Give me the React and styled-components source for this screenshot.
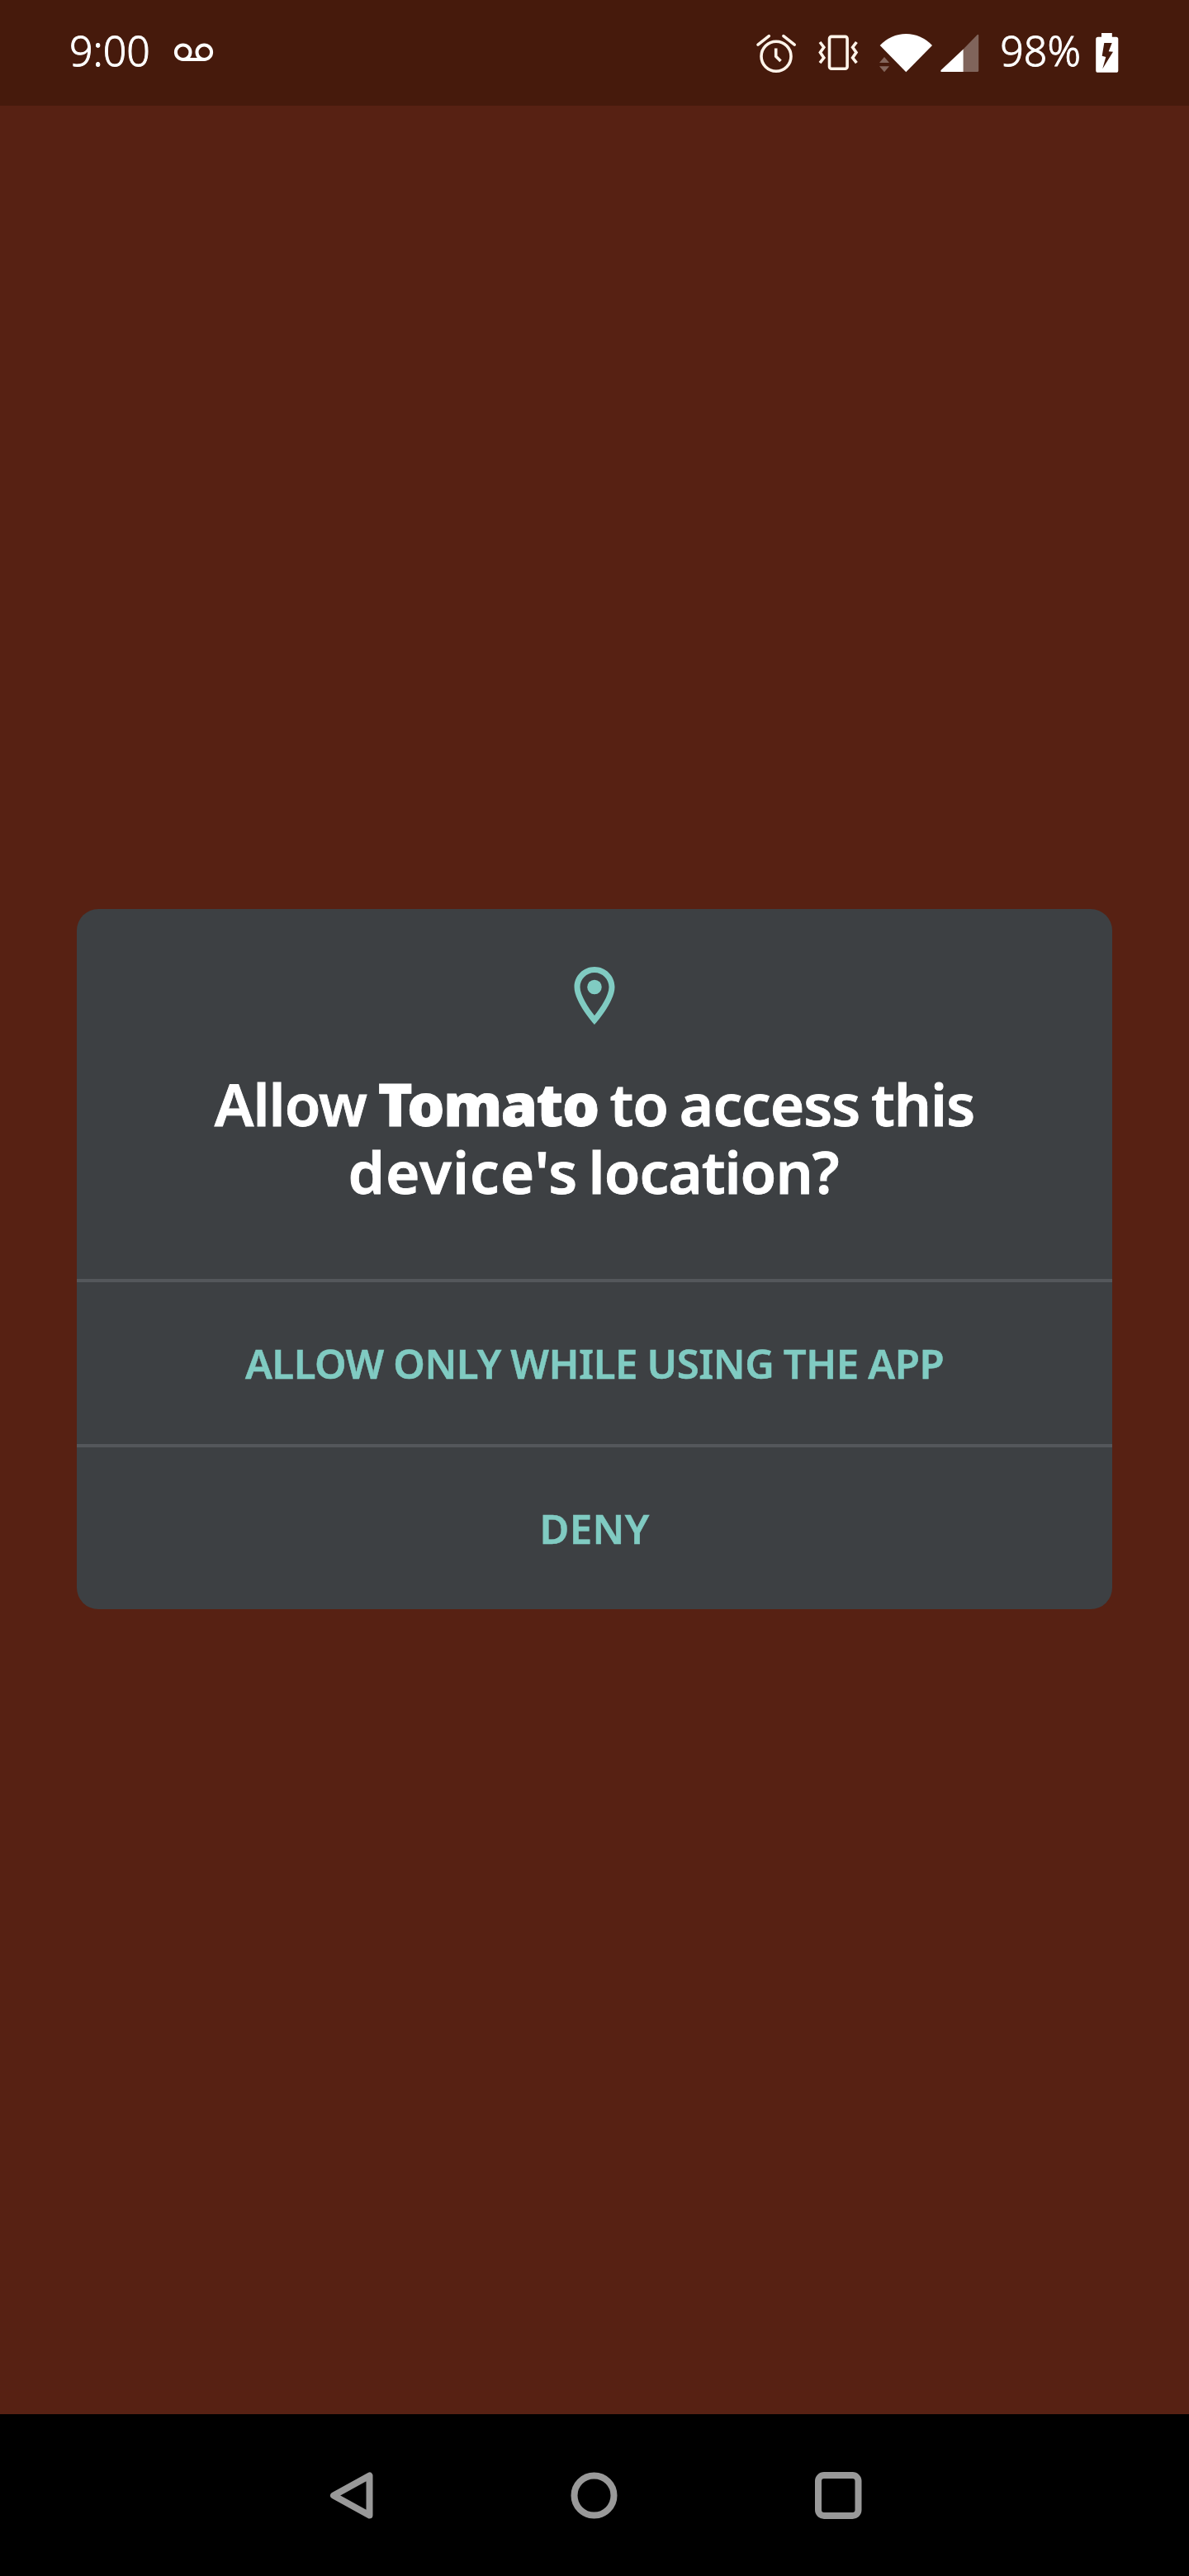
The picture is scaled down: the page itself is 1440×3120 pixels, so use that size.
import React from "react";
import styled, { createGlobalStyle } from "styled-components";

const GlobalStyle = createGlobalStyle`
  * { box-sizing: border-box; }
  body { margin: 0; background: #572113; }
`;

const Screen = styled.div`
  display: flex;
  flex-direction: column;
  width: 1440px;
  height: 3120px;
  background: #572113;
  font-family: "Noto Sans", "Open Sans", sans-serif;
`;

const StatusBar = styled.header`
  display: flex;
  justify-content: space-between;
  align-items: center;
  height: 128px;
  padding: 0 85px 6px 84px;
  background: #461a0c;
  color: #fff;
`;

const StatusGroup = styled.div`
  display: flex;
  align-items: center;
`;

const StatusText = styled.span`
  font-size: 50px;
  font-weight: 300;
  line-height: 60px;
  -webkit-text-stroke: 0.9px #fff;
  margin-left: ${(p) => p.$gap || 0}px;
`;

const StatusIcon = styled.svg`
  display: block;
  flex: none;
  height: 60px;
  margin-left: ${(p) => p.$gap || 0}px;
  overflow: visible;
`;

const Main = styled.main`
  flex: 1;
  display: flex;
  justify-content: center;
  align-items: center;
  padding-bottom: 2px;
`;

const Dialog = styled.section`
  display: flex;
  flex-direction: column;
  width: 1254px;
  border-radius: 26px;
  background: #3d4043;
  overflow: hidden;
`;

const DialogHeader = styled.div`
  display: flex;
  flex-direction: column;
  align-items: center;
  height: 448px;
  padding-top: 63px;
`;

const Title = styled.h1`
  margin: 48px 0 0;
  color: #fff;
  font-size: 71px;
  font-weight: 600;
  line-height: 82px;
  text-align: center;
  -webkit-text-stroke: 0.8px #fff;
`;

const TitleLine = styled.span`
  display: block;
  white-space: nowrap;
  letter-spacing: -1px;
  word-spacing: ${(p) => p.$space}px;
  padding-right: ${(p) => p.$inset || 0}px;
`;

const LooseWord = styled.span`
  letter-spacing: 1px;
`;

const AppName = styled.strong`
  font-weight: 900;
  letter-spacing: -1.4px;
`;

const DialogButton = styled.button`
  height: 200px;
  padding: 0;
  border: 0;
  border-top: 4px solid #54575b;
  background: none;
  color: #80cbc2;
  font: 600 49px "Noto Sans", "Open Sans", sans-serif;
  -webkit-text-stroke: 0.5px #80cbc2;
  letter-spacing: ${(p) => p.$tracking || 0}px;
  word-spacing: ${(p) => p.$space || 0}px;
`;

const NavBar = styled.nav`
  display: flex;
  justify-content: center;
  align-items: center;
  gap: 234.5px;
  height: 196px;
  background: #000;
`;

const NavIcon = styled.svg`
  display: block;
  width: 60px;
  height: 60px;
  fill: none;
  stroke: #999;
  stroke-width: 8;
  stroke-linejoin: round;
`;

export default function App() {
  return (
    <Screen>
      <GlobalStyle />
      <StatusBar>
        <StatusGroup>
          <StatusText>9:00</StatusText>
          <StatusIcon $gap={28} width="49" viewBox="210 31 49 60" fill="none" stroke="#fff" strokeWidth="4">
            <circle cx="221.7" cy="63.2" r="8.8" />
            <circle cx="247.3" cy="63.2" r="8.8" />
            <path d="M221.7 72h25.6" />
          </StatusIcon>
        </StatusGroup>
        <StatusGroup>
          <StatusIcon width="50" viewBox="915 31 50 60" fill="none" stroke="#fff4ea" strokeWidth="3.6" strokeLinecap="round">
            <circle cx="940" cy="68.3" r="18" />
            <path d="M939.7 58.5v9.8l5.8 5.8" strokeLinecap="butt" />
            <path d="M918 54.2l13.3-10.6M962.2 54.2l-13.3-10.6" />
          </StatusIcon>
          <StatusIcon $gap={26} width="48" viewBox="991 31 48 60" fill="none" stroke="#fff4ea" strokeWidth="3.6">
            <rect x="1004.5" y="44.4" width="21.6" height="38.8" rx="2.5" />
            <path d="M993 51l4.8 6.2-4.4 6.4 4.4 6.4-4.8 6.2M1037.4 51l-4.8 6.2 4.4 6.4-4.4 6.4 4.8 6.2" />
          </StatusIcon>
          <StatusIcon $gap={26} width="65" viewBox="1065 31 65 60" fill="#fff">
            <path d="M1065.7 55a42.8 42.8 0 0 1 63.3 0L1097.3 87.2z" />
            <path d="M1065 76h12l-6-7zM1065 80.3h12l-6 7z" fill="#84665c" />
          </StatusIcon>
          <StatusIcon $gap={9} width="47" viewBox="1139 31 47 60" fill="#fff">
            <path d="M1166.7 59.4L1183.5 42.3q1.7-1.4 1.7.6V85.5q0 1.5-1.5 1.5H1166.7z" fill="#80645b" />
            <path d="M1166.7 59.4V87H1140q-1.6-.6-.4-1.9z" />
          </StatusIcon>
          <StatusText $gap={25}>98%</StatusText>
          <StatusIcon $gap={18} width="28" viewBox="1327 31 28 60">
            <path
              fill="#fff"
              fillRule="evenodd"
              d="M1334 40h12.8v4.7h5q2.5 0 2.500 2.500v38q0 2.600-2.500 2.600h-22q-2.600 0-2.600-2.600v-38q0-2.500 2.600-2.500h4.200zM1337.300 52l-2.600 15.700 4.600 1.300-4 14.300 12.700-20.600-5.300-.5 4-10.200z"
            />
          </StatusIcon>
        </StatusGroup>
      </StatusBar>

      <Main>
        <Dialog>
          <DialogHeader>
            <svg width="84" height="84" viewBox="0 0 24 24" fill="#80cbc2">
              <path d="M12 2C8.130 2 5 5.130 5 9c0 5.250 7 13 7 13s7-7.750 7-13c0-3.870-3.130-7-7-7zM7 9c0-2.760 2.240-5 5-5s5 2.240 5 5c0 2.880-2.880 7.190-5 9.880C9.920 16.210 7 11.850 7 9z" />
              <circle cx="12" cy="9" r="2.500" />
            </svg>
            <Title>
              <TitleLine $space={-3.7}>
                Allow <AppName>Tomato</AppName> to access this
              </TitleLine>
              <TitleLine $space={-5} $inset={3}>
                <LooseWord>device's</LooseWord> location?
              </TitleLine>
            </Title>
          </DialogHeader>
          <DialogButton $tracking={-0.45} $space={-0.8}>
            ALLOW ONLY WHILE USING THE APP
          </DialogButton>
          <DialogButton $tracking={0.4}>DENY</DialogButton>
        </Dialog>
      </Main>

      <NavBar>
        <NavIcon viewBox="0 0 60 60">
          <path d="M51.5 6.5v48L8 30.5z" />
        </NavIcon>
        <NavIcon viewBox="0 0 60 60">
          <circle cx="29.5" cy="30.5" r="24" />
        </NavIcon>
        <NavIcon viewBox="0 0 60 60">
          <rect x="6" y="6" width="48.5" height="49" rx="7" />
        </NavIcon>
      </NavBar>
    </Screen>
  );
}
